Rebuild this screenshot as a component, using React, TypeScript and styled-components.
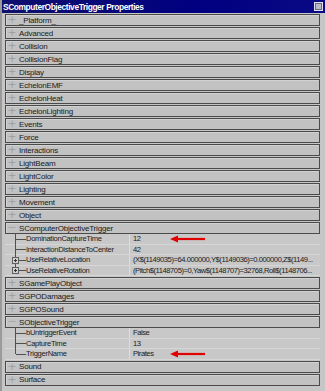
import React from "react";
import styled, { createGlobalStyle } from "styled-components";

const Global = createGlobalStyle`
  html, body {
    margin: 0;
    padding: 0;
    background: #c4c4c4;
  }
  body {
    font-family: "Liberation Sans", Arial, sans-serif;
  }
`;

const Window = styled.div`
  width: 325px;
  height: 391px;
  background: #c6c6c6;
  box-sizing: border-box;
  border-left: 2px solid #9a9a9a;
  display: flex;
  flex-direction: column;
  overflow: hidden;
`;

const TitleBar = styled.div`
  height: 13px;
  background: linear-gradient(90deg, #10106e, #000080 60%, #0a0a86);
  color: #fff;
  font-weight: bold;
  font-size: 8.4px;
  display: flex;
  align-items: center;
  justify-content: space-between;
  padding: 0 2px 0 1px;
  letter-spacing: -0.4px;
`;

const CloseBox = styled.div`
  width: 7px;
  height: 7px;
  background: #b8b8c8;
  border: 1px solid #e0e0f0;
  box-shadow: inset 0 0 0 1px #6a6a80;
`;

const List = styled.div`
  padding: 0 5px 0 3px;
  display: flex;
  flex-direction: column;
`;

const Category = styled.div`
  height: 10px;
  margin-top: 1px;
  border: 1px solid #4a4a4a;
  background: #c2c2c2;
  display: flex;
  align-items: center;
  font-size: 8px;
  letter-spacing: -0.2px;
  color: #1a1a1a;
  box-shadow: inset 1px 1px 0 #d2d2d2;
`;

const Sign = styled.span`
  width: 12px;
  text-align: center;
  color: #8c8c8c;
  font-size: 11px;
  line-height: 10px;
  font-family: "DejaVu Sans", sans-serif;
  font-weight: 300;
`;

const Label = styled.span`
  padding-left: 1px;
  white-space: nowrap;
`;

const PropRow = styled.div`
  height: 10.5px;
  display: grid;
  grid-template-columns: 125px 1fr;
  font-size: 7.6px;
  color: #1a1a1a;
  border-bottom: 1px solid #d6d6d6;
  box-sizing: border-box;
  background: #c8c8c8;
`;

const NameCell = styled.div`
  position: relative;
  padding-left: 21px;
  display: flex;
  align-items: center;
  white-space: nowrap;
  letter-spacing: -0.3px;
  border-right: 1px solid #dedede;
`;

const Tree = styled.span<{ $last?: boolean }>`
  position: absolute;
  left: 10px;
  top: -1px;
  bottom: ${(p) => (p.$last ? "50%" : "-1px")};
  border-left: 1px solid #505050;
  &::after {
    content: "";
    position: absolute;
    left: 0;
    top: ${(p) => (p.$last ? "100%" : "50%")};
    width: 10px;
    border-top: 1px solid #505050;
  }
`;

const PlusBox = styled.span`
  position: absolute;
  left: 7px;
  top: 50%;
  margin-top: -3px;
  width: 5px;
  height: 5px;
  border: 1px solid #606060;
  background: #d0d0d0;
  z-index: 1;
  &::before {
    content: "";
    position: absolute;
    left: 1px;
    top: 2px;
    width: 3px;
    border-top: 1px solid #303030;
  }
  &::after {
    content: "";
    position: absolute;
    left: 2px;
    top: 1px;
    height: 3px;
    border-left: 1px solid #303030;
  }
`;

const ValueCell = styled.div`
  position: relative;
  padding-left: 3px;
  display: flex;
  align-items: center;
  white-space: nowrap;
  overflow: hidden;
  letter-spacing: -0.45px;
`;

const Arrow = styled.svg`
  position: absolute;
  left: 40px;
  top: 50%;
  margin-top: -4px;
`;

type Prop = { name: string; value: string; expandable?: boolean; arrow?: boolean };

const RedArrow = () => (
  <Arrow width="36" height="8" viewBox="0 0 36 8">
    <line x1="6" y1="4" x2="35" y2="4" stroke="#e00000" strokeWidth="2.2" />
    <polygon points="0,4 8,0.5 8,7.5" fill="#e00000" />
  </Arrow>
);

const Props = ({ items }: { items: Prop[] }) => (
  <>
    {items.map((p, i) => (
      <PropRow key={p.name}>
        <NameCell>
          <Tree $last={i === items.length - 1} />
          {p.expandable && <PlusBox />}
          {p.name}
        </NameCell>
        <ValueCell>
          {p.value}
          {p.arrow && <RedArrow />}
        </ValueCell>
      </PropRow>
    ))}
  </>
);

const Cat = ({ label, open }: { label: string; open?: boolean }) => (
  <Category>
    <Sign>{open ? "−" : "+"}</Sign>
    <Label>{label}</Label>
  </Category>
);

const before = [
  "_Platform_",
  "Advanced",
  "Collision",
  "CollisionFlag",
  "Display",
  "EchelonEMF",
  "EchelonHeat",
  "EchelonLighting",
  "Events",
  "Force",
  "Interactions",
  "LightBeam",
  "LightColor",
  "Lighting",
  "Movement",
  "Object",
];

const computerProps: Prop[] = [
  { name: "DominationCaptureTime", value: "12", arrow: true },
  { name: "InteractionDistanceToCenter", value: "42" },
  {
    name: "UseRelativeLocation",
    value: "(X$(1149035)=64.000000,Y$(1149036)=0.000000,Z$(1149...",
    expandable: true,
  },
  {
    name: "UseRelativeRotation",
    value: "(Pitch$(1148705)=0,Yaw$(1148707)=32768,Roll$(1148706...",
    expandable: true,
  },
];

const triggerProps: Prop[] = [
  { name: "bUntriggerEvent", value: "False" },
  { name: "CaptureTime", value: "13" },
  { name: "TriggerName", value: "Pirates", arrow: true },
];

export default function App() {
  return (
    <>
      <Global />
      <Window>
        <TitleBar>
          <span>SComputerObjectiveTrigger Properties</span>
          <CloseBox />
        </TitleBar>
        <List>
          {before.map((c) => (
            <Cat key={c} label={c} />
          ))}
          <Cat label="SComputerObjectiveTrigger" open />
          <Props items={computerProps} />
          <Cat label="SGamePlayObject" />
          <Cat label="SGPODamages" />
          <Cat label="SGPOSound" />
          <Cat label="SObjectiveTrigger" open />
          <Props items={triggerProps} />
          <Cat label="Sound" />
          <Cat label="Surface" />
        </List>
      </Window>
    </>
  );
}
